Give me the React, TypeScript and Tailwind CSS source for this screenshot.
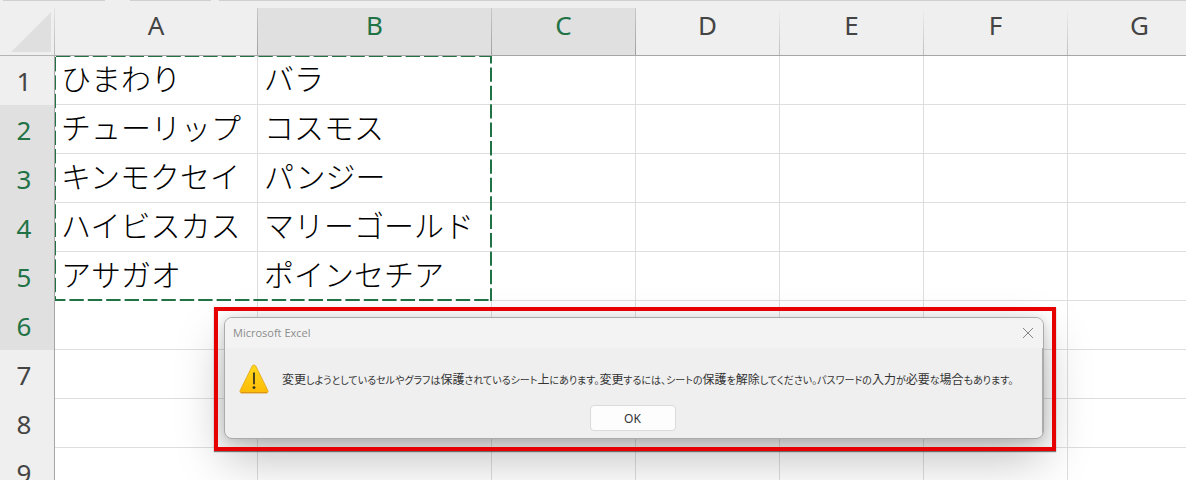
import React from "react";

const columns = [
  { name: "A", width: "w-[203px]", selected: false },
  { name: "B", width: "w-[234px]", selected: true },
  { name: "C", width: "w-[144px]", selected: true },
  { name: "D", width: "w-[144px]", selected: false },
  { name: "E", width: "w-[144px]", selected: false },
  { name: "F", width: "w-[144px]", selected: false },
  { name: "G", width: "w-[144px]", selected: false },
];

const rows: { cells: string[]; selected: boolean }[] = [
  { cells: ["ひまわり", "バラ"], selected: false },
  { cells: ["チューリップ", "コスモス"], selected: true },
  { cells: ["キンモクセイ", "パンジー"], selected: true },
  { cells: ["ハイビスカス", "マリーゴールド"], selected: true },
  { cells: ["アサガオ", "ポインセチア"], selected: true },
  { cells: [], selected: true },
  { cells: [], selected: false },
  { cells: [], selected: false },
  { cells: [], selected: false },
];

const message =
  "変更しようとしているセルやグラフは保護されているシート上にあります。変更するには、シートの保護を解除してください。パスワードの入力が必要な場合もあります。";

function FormulaBarEdge() {
  return (
    <div className="flex h-2 items-start bg-[#efefef]">
      <div className="ml-[3px] h-px w-[102px] bg-[#cfcfcf]" />
      <div className="ml-[25px] h-px w-[81px] bg-[#cfcfcf]" />
      <div className="ml-2 h-px flex-1 bg-[#cfcfcf]" />
    </div>
  );
}

function ColumnHeader({ name, selected, dark }: { name: string; selected: boolean; dark: boolean }) {
  return (
    <th
      scope="col"
      className={`border-b border-[#a6a6a6] p-0 font-normal ${
        selected ? "bg-[#e0e0e0] text-[#217346]" : "bg-[#efefef] text-[#444444]"
      }`}
    >
      <div className="flex h-[47px]">
        <span className="flex-1 pt-px text-center text-[26px] leading-8">{name}</span>
        <span
          className={`w-px bg-linear-to-b ${
            dark ? "from-[#c8c8c8] to-[#a0a0a0]" : "from-[#efefef] to-[#c0c0c0]"
          }`}
        />
      </div>
    </th>
  );
}

function RowHeader({ index, selected }: { index: number; selected: boolean }) {
  return (
    <th
      scope="row"
      className={`border-r border-[#a6a6a6] p-0 font-normal ${
        selected ? "bg-[#e0e0e0] text-[#217346]" : "bg-[#efefef] text-[#444444]"
      }`}
    >
      <div className="flex h-[49px] flex-col">
        <span className="flex-1 pt-px pr-1.5 text-center text-[26px] leading-[48px]">{index}</span>
        <span
          className={`h-px bg-linear-to-r ${
            selected ? "from-[#cccccc] to-[#a8a8a8]" : "from-[#e8e8e8] to-[#c4c4c4]"
          }`}
        />
      </div>
    </th>
  );
}

function Sheet() {
  return (
    <table className="w-max table-fixed border-separate border-spacing-0">
      <colgroup>
        <col className="w-[55px]" />
        {columns.map((c) => (
          <col key={c.name} className={c.width} />
        ))}
      </colgroup>
      <thead>
        <tr>
          <td className="border-b border-[#b4b4b4] bg-[#efefef] p-0">
            <div className="flex h-[47px] w-[55px]">
              <svg className="mt-1 ml-[11px] h-10 w-10" viewBox="0 0 40 40" aria-hidden="true">
                <path d="M40 0V40H0Z" fill="#dfdfdf" />
              </svg>
              <span className="ml-[3px] w-px bg-linear-to-b from-[#e4e4e4] to-[#b8b8b8]" />
            </div>
          </td>
          {columns.map((c, i) => (
            <ColumnHeader
              key={c.name}
              name={c.name}
              selected={c.selected}
              dark={c.selected || Boolean(columns[i + 1]?.selected)}
            />
          ))}
        </tr>
      </thead>
      <tbody>
        {rows.map((row, r) => (
          <tr key={r}>
            <RowHeader index={r + 1} selected={row.selected} />
            {columns.map((c, i) => (
              <td
                key={c.name}
                className="border-r border-b border-[#dedede] bg-white py-0 pr-0 pl-1.5 text-left font-['Noto_Sans_CJK_JP',sans-serif] text-[30px] leading-[42px] font-light whitespace-nowrap text-black"
              >
                {row.cells[i] ? <div className="h-12">{row.cells[i]}</div> : null}
              </td>
            ))}
          </tr>
        ))}
      </tbody>
    </table>
  );
}

function CopyOutline() {
  return (
    <svg className="pointer-events-none absolute top-[55px] left-[54px] h-[246px] w-[438px]" viewBox="0 0 438 246" fill="none" aria-hidden="true">
      <path d="M1.5 1V245" stroke="#fff" strokeWidth="1" />
      <path d="M1 1.5H437M1.5 1V245" stroke="#217346" strokeWidth="1" strokeDasharray="14.4 4" strokeDashoffset="-1" />
      <path d="M1 245H438M437 1V246" stroke="#fff" strokeWidth="2" />
      <path d="M1 245H438" stroke="#217346" strokeWidth="2" strokeDasharray="14.4 4" strokeDashoffset="4" />
      <path d="M437 1V246" stroke="#217346" strokeWidth="2" strokeDasharray="14.4 4" strokeDashoffset="7" />
    </svg>
  );
}

function WarningIcon() {
  return (
    <svg className="h-[30px] w-[30px] shrink-0" viewBox="0 0 30 30" aria-hidden="true">
      <defs>
        <linearGradient id="warn" x1="0" y1="0" x2="0" y2="1">
          <stop offset="0" stopColor="#ffd91c" />
          <stop offset="1" stopColor="#fdbb08" />
        </linearGradient>
      </defs>
      <path
        d="M13.2 2C14 .7 16 .7 16.8 2L28.9 26.6C29.5 28 28.8 29 27.4 29H2.6C1.2 29 .5 28 1.1 26.6Z"
        fill="url(#warn)"
        stroke="#e5a51c"
        strokeWidth=".8"
      />
      <path d="M2.4 28.6H27.6" stroke="#d9901a" strokeWidth="1" strokeLinecap="round" />
      <path d="M15 9.2V19.6" stroke="#2d2a20" strokeWidth="1.7" strokeLinecap="round" />
      <circle cx="15" cy="23.6" r="1.4" fill="#2d2a20" />
    </svg>
  );
}

// Kana are set smaller than kanji, as in a compact UI face.
function CompactJapanese({ text }: { text: string }) {
  return (
    <>
      {text.split(/([一-龠]+)/).map((part, i) => (
        <span key={i} className={i % 2 ? "text-xs" : "text-[10px]"}>
          {part}
        </span>
      ))}
    </>
  );
}

function ProtectedSheetDialog() {
  return (
    <div className="absolute top-[307px] left-[214px] pt-2.5 pr-3 pb-3 pl-2.5">
      <div
        role="dialog"
        aria-labelledby="dialog-title"
        aria-describedby="dialog-message"
        className="w-[820px] overflow-hidden rounded-lg border border-[#ababab] bg-[#efefef] shadow-[0_20px_48px_#00000040,0_2px_12px_#00000028]"
      >
        <div className="flex h-[30px] items-center justify-between bg-[#f3f3f3] pr-[9px] pb-px pl-2">
          <h1 id="dialog-title" className="pt-px font-['Open_Sans',sans-serif] text-[11px] text-[#8c8c8c]">
            Microsoft Excel
          </h1>
          <button type="button" aria-label="閉じる" className="flex h-3 w-3 items-center justify-center">
            <svg className="h-3 w-3" viewBox="0 0 12 12" aria-hidden="true">
              <path d="M1 1L11 11M11 1L1 11" stroke="#858585" strokeWidth="1" />
            </svg>
          </button>
        </div>
        <div className="border-r border-[#ababab]">
          <div className="flex items-center gap-[13px] pt-4 pl-3.5">
            <WarningIcon />
            <p
              id="dialog-message"
              className="font-['Noto_Sans_CJK_JP',sans-serif] text-xs whitespace-nowrap text-[#333333] [font-feature-settings:'palt']"
            >
              <CompactJapanese text={message} />
            </p>
          </div>
          <div className="flex justify-center pt-[11px] pr-0.5 pb-[7px]">
            <button
              type="button"
              className="h-[26px] w-[86px] rounded-sm border border-[#dadada] bg-[#fdfdfd] pt-0.5 font-['Noto_Sans',sans-serif] text-xs text-[#333333]"
            >
              OK
            </button>
          </div>
        </div>
      </div>
      <div className="pointer-events-none absolute inset-0 border-4 border-[#e60000] shadow-[0_1px_1px_#00000080]" />
    </div>
  );
}

export default function App() {
  return (
    <main className="relative h-screen overflow-hidden bg-white font-['Noto_Sans',sans-serif]">
      <FormulaBarEdge />
      <Sheet />
      <CopyOutline />
      <ProtectedSheetDialog />
    </main>
  );
}
